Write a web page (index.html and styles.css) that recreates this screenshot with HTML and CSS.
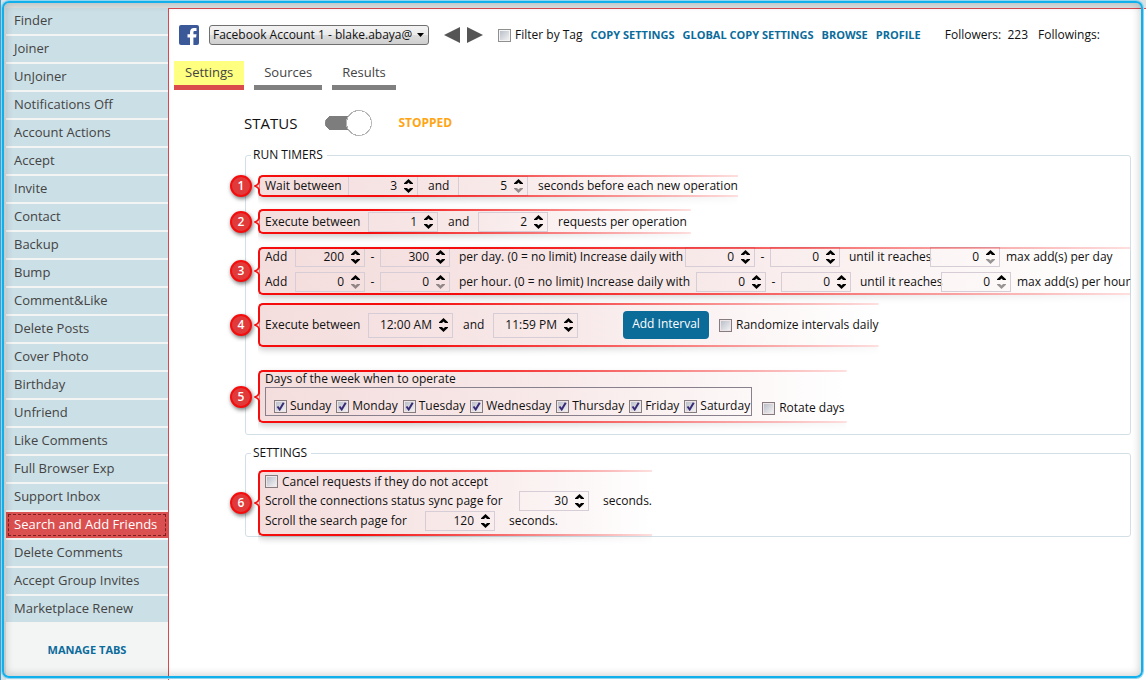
FILE: index.html
```html
<!DOCTYPE html>
<html lang="en">
<head>
<meta charset="utf-8">
<title>Search and Add Friends</title>
<link rel="stylesheet" href="styles.css">
</head>
<body>
<svg class="defs" aria-hidden="true">
  <symbol id="up" viewBox="0 0 9 5"><path d="M4.500 0 9 4.200V5H6L4.500 3.600 3 5H0V4.200z"/></symbol>
  <symbol id="down" viewBox="0 0 9 5"><path d="M4.500 5 9 .8V0H6L4.500 1.400 3 0H0V.8z"/></symbol>
  <symbol id="tip" viewBox="0 0 6 10"><path d="M5.500 0C5 3 4 4 1 5 4 6 5 7 5.500 10" fill="#f6dede" stroke="#f50d0d" stroke-width="1.800"/></symbol>
</svg>
<div class="app">
  <nav class="side">
    <a href="#">Finder</a><a href="#">Joiner</a><a href="#">UnJoiner</a><a href="#">Notifications Off</a><a href="#">Account Actions</a><a href="#">Accept</a><a href="#">Invite</a><a href="#">Contact</a><a href="#">Backup</a><a href="#">Bump</a><a href="#">Comment&amp;Like</a><a href="#">Delete Posts</a><a href="#">Cover Photo</a><a href="#">Birthday</a><a href="#">Unfriend</a><a href="#">Like Comments</a><a href="#">Full Browser Exp</a><a href="#">Support Inbox</a><a href="#" class="active">Search and Add Friends</a><a href="#">Delete Comments</a><a href="#">Accept Group Invites</a><a href="#">Marketplace Renew</a>
    <button class="link manage" type="button">MANAGE TABS</button>
  </nav>
  <main class="main">
    <header class="top">
      <svg class="fb" viewBox="0 0 20 20" aria-label="Facebook"><rect width="20" height="20" rx="2" fill="#3b5998"/><path d="M11 20v-7.500H8.500V9.200H11V7.300C11 4.500 12.500 3 15 3h2.500v3h-1.800c-1.100 0-1.300.6-1.300 1.400v1.800h3.100l-.4 3.300h-2.700V20z" fill="#fff"/></svg>
      <select class="account" aria-label="Account"><option>Facebook Account 1 - blake.abaya@yahoo.com</option></select>
      <div class="steps">
        <button type="button" aria-label="Previous account"><svg viewBox="0 0 16 16"><path d="M0 8 16 0V16z"/></svg></button>
        <button type="button" aria-label="Next account"><svg viewBox="0 0 16 16"><path d="M16 8 0 0V16z"/></svg></button>
      </div>
      <label class="check"><input type="checkbox">Filter by Tag</label>
      <div class="links">
        <button class="link" type="button">COPY SETTINGS</button>
        <button class="link" type="button">GLOBAL COPY SETTINGS</button>
        <button class="link" type="button">BROWSE</button>
        <button class="link" type="button">PROFILE</button>
      </div>
      <div class="counts"><span>Followers:&nbsp; 223</span><span>Followings:</span></div>
    </header>
    <div class="tabs">
      <button class="tab current" type="button">Settings</button>
      <button class="tab" type="button">Sources</button>
      <button class="tab" type="button">Results</button>
    </div>
    <div class="panel">
      <div class="status">
        <label for="run">STATUS</label>
        <input id="run" class="toggle" type="checkbox" checked>
        <strong>STOPPED</strong>
      </div>
      <fieldset class="group timers">
        <legend>RUN TIMERS</legend>
        <div class="note wait">
          <span class="badge">1</span><svg class="tip"><use href="#tip"/></svg>
          <div class="row">
            <span class="t-wait">Wait between</span>
            <span class="spin"><input type="text" value="3" aria-label="Minimum wait"><button type="button" aria-label="Up"><svg><use href="#up"/></svg></button><button type="button" aria-label="Down"><svg><use href="#down"/></svg></button></span>
            <span class="t-and">and</span>
            <span class="spin"><input type="text" value="5" aria-label="Maximum wait"><button type="button" aria-label="Up"><svg><use href="#up"/></svg></button><button type="button" aria-label="Down" disabled><svg><use href="#down"/></svg></button></span>
            <span>seconds before each new operation</span>
          </div>
        </div>
        <div class="note requests">
          <span class="badge">2</span><svg class="tip"><use href="#tip"/></svg>
          <div class="row">
            <span class="t-exec">Execute between</span>
            <span class="spin"><input type="text" value="1" aria-label="Minimum requests"><button type="button" aria-label="Up"><svg><use href="#up"/></svg></button><button type="button" aria-label="Down"><svg><use href="#down"/></svg></button></span>
            <span class="t-and">and</span>
            <span class="spin"><input type="text" value="2" aria-label="Maximum requests"><button type="button" aria-label="Up"><svg><use href="#up"/></svg></button><button type="button" aria-label="Down"><svg><use href="#down"/></svg></button></span>
            <span>requests per operation</span>
          </div>
        </div>
        <div class="note limits">
          <span class="badge">3</span><svg class="tip"><use href="#tip"/></svg>
          <div class="row tight">
            <span class="t-add">Add</span>
            <span class="spin"><input type="text" value="200" aria-label="Minimum per day"><button type="button" aria-label="Up"><svg><use href="#up"/></svg></button><button type="button" aria-label="Down"><svg><use href="#down"/></svg></button></span>
            <span class="dash">-</span>
            <span class="spin"><input type="text" value="300" aria-label="Maximum per day"><button type="button" aria-label="Up"><svg><use href="#up"/></svg></button><button type="button" aria-label="Down"><svg><use href="#down"/></svg></button></span>
            <span class="t-day">per day. (0 = no limit) Increase daily with</span>
            <span class="spin"><input type="text" value="0" aria-label="Minimum daily increase"><button type="button" aria-label="Up"><svg><use href="#up"/></svg></button><button type="button" aria-label="Down"><svg><use href="#down"/></svg></button></span>
            <span class="dash">-</span>
            <span class="spin"><input type="text" value="0" aria-label="Maximum daily increase"><button type="button" aria-label="Up"><svg><use href="#up"/></svg></button><button type="button" aria-label="Down"><svg><use href="#down"/></svg></button></span>
            <span class="t-until">until it reaches</span>
            <span class="spin"><input type="text" value="0" aria-label="Maximum adds per day"><button type="button" aria-label="Up"><svg><use href="#up"/></svg></button><button type="button" aria-label="Down" disabled><svg><use href="#down"/></svg></button></span>
            <span class="t-max">max add(s) per day</span>
          </div>
          <div class="row tight">
            <span class="t-add">Add</span>
            <span class="spin"><input type="text" value="0" aria-label="Minimum per hour"><button type="button" aria-label="Up"><svg><use href="#up"/></svg></button><button type="button" aria-label="Down" disabled><svg><use href="#down"/></svg></button></span>
            <span class="dash">-</span>
            <span class="spin"><input type="text" value="0" aria-label="Maximum per hour"><button type="button" aria-label="Up"><svg><use href="#up"/></svg></button><button type="button" aria-label="Down" disabled><svg><use href="#down"/></svg></button></span>
            <span class="t-hour">per hour. (0 = no limit) Increase daily with</span>
            <span class="spin"><input type="text" value="0" aria-label="Minimum hourly increase"><button type="button" aria-label="Up"><svg><use href="#up"/></svg></button><button type="button" aria-label="Down"><svg><use href="#down"/></svg></button></span>
            <span class="dash">-</span>
            <span class="spin"><input type="text" value="0" aria-label="Maximum hourly increase"><button type="button" aria-label="Up"><svg><use href="#up"/></svg></button><button type="button" aria-label="Down"><svg><use href="#down"/></svg></button></span>
            <span class="t-until">until it reaches</span>
            <span class="spin"><input type="text" value="0" aria-label="Maximum adds per hour"><button type="button" aria-label="Up"><svg><use href="#up"/></svg></button><button type="button" aria-label="Down" disabled><svg><use href="#down"/></svg></button></span>
            <span class="t-max">max add(s) per hour</span>
          </div>
        </div>
        <div class="note interval">
          <span class="badge">4</span><svg class="tip"><use href="#tip"/></svg>
          <div class="row">
            <span class="t-exec">Execute between</span>
            <span class="spin time"><input type="text" value="12:00 AM" aria-label="Start time"><button type="button" aria-label="Up"><svg><use href="#up"/></svg></button><button type="button" aria-label="Down"><svg><use href="#down"/></svg></button></span>
            <span class="t-and">and</span>
            <span class="spin time"><input type="text" value="11:59 PM" aria-label="End time"><button type="button" aria-label="Up"><svg><use href="#up"/></svg></button><button type="button" aria-label="Down"><svg><use href="#down"/></svg></button></span>
            <button class="add" type="button">Add Interval</button>
            <label class="check"><input type="checkbox">Randomize intervals daily</label>
          </div>
        </div>
        <div class="note week">
          <span class="badge">5</span><svg class="tip"><use href="#tip"/></svg>
          <div class="caption">Days of the week when to operate</div>
          <div class="row">
            <div class="days">
              <label class="check"><input type="checkbox" checked>Sunday</label>
              <label class="check"><input type="checkbox" checked>Monday</label>
              <label class="check"><input type="checkbox" checked>Tuesday</label>
              <label class="check"><input type="checkbox" checked>Wednesday</label>
              <label class="check"><input type="checkbox" checked>Thursday</label>
              <label class="check"><input type="checkbox" checked>Friday</label>
              <label class="check"><input type="checkbox" checked>Saturday</label>
            </div>
            <label class="check rotate"><input type="checkbox">Rotate days</label>
          </div>
        </div>
      </fieldset>
      <fieldset class="group">
        <legend>SETTINGS</legend>
        <div class="note sync">
          <span class="badge">6</span><svg class="tip"><use href="#tip"/></svg>
          <label class="check"><input type="checkbox">Cancel requests if they do not accept</label>
          <div class="row">
            <span class="t-sync">Scroll the connections status sync page for</span>
            <span class="spin"><input type="text" value="30" aria-label="Sync page seconds"><button type="button" aria-label="Up"><svg><use href="#up"/></svg></button><button type="button" aria-label="Down"><svg><use href="#down"/></svg></button></span>
            <span class="unit">seconds.</span>
          </div>
          <div class="row">
            <span class="t-search">Scroll the search page for</span>
            <span class="spin"><input type="text" value="120" aria-label="Search page seconds"><button type="button" aria-label="Up"><svg><use href="#up"/></svg></button><button type="button" aria-label="Down"><svg><use href="#down"/></svg></button></span>
            <span class="unit">seconds.</span>
          </div>
        </div>
      </fieldset>
    </div>
  </main>
  <div class="frame"></div>
</div>
</body>
</html>
```
FILE: styles.css
```css
* { box-sizing: border-box; }
body { margin: 0; font: 12px/18px "Open Sans", "Noto Sans", sans-serif; color: #111; background: #fff; }
button, input, select { font: inherit; color: inherit; margin: 0; }
button { border: 0; padding: 0; background: none; }
.defs { position: absolute; width: 0; height: 0; }
.app { position: relative; display: flex; min-height: 100vh; padding-top: 8px; background: #dde2e2; border-left: 1px solid #3a9fd4; }

.side { width: 162px; margin-left: 5px; flex: none; display: flex; flex-direction: column; gap: 2px; background: #f3f4f4; }
.side a { height: 26px; padding-left: 8px; font-size: 13px; line-height: 25px; color: #444; background: #cbdfe6; text-decoration: none; white-space: nowrap; }
.side a.active { color: #fff; background: #da4f4f; outline: 1px dashed #7d1f1f; outline-offset: -3px; }
.link { font-size: 11px; font-weight: 700; color: #0b6c9c; white-space: nowrap; }
.manage { margin-top: 17px; }

.main { flex: 1; min-width: 0; padding: 16px 0 0 5px; background: #fff; border: solid #d9474f; border-width: 1px 0 0 1px; }
.top { display: flex; align-items: center; height: 20px; margin-left: 5px; line-height: 16px; white-space: nowrap; }
.fb { width: 20px; height: 20px; }
.account { width: 220px; height: 20px; margin: 0 15px 0 10px; padding: 0 16px 0 3px; border: 1px solid #707070; border-radius: 3px; appearance: none; text-overflow: clip;
  background: url("data:image/svg+xml,%3Csvg xmlns='http://www.w3.org/2000/svg' viewBox='0 0 7 4'%3E%3Cpath d='M0 0h7L3.500 4z'/%3E%3C/svg%3E") right 4px center / 7px 4px no-repeat, linear-gradient(#f2f2f2, #ebebeb 50%, #ddd 50%, #cfcfcf); }
.steps { display: flex; gap: 7px; margin-right: 15px; }
.steps svg { display: block; width: 16px; height: 16px; fill: #555; }
.check { display: flex; align-items: center; gap: 4px; white-space: nowrap; }
.check input { width: 13px; height: 13px; flex: none; appearance: none; border: 1px solid #8e8f8f; background: linear-gradient(135deg, #b4b9c4, #f6f6f6); box-shadow: inset 0 0 0 1px #f4f4f4; }
.check input:checked { background: url("data:image/svg+xml,%3Csvg xmlns='http://www.w3.org/2000/svg' viewBox='0 0 11 11'%3E%3Cpath d='M2.500 5.500 4.700 8.500 8.700 1.800' fill='none' stroke='%23392a78' stroke-width='2'/%3E%3C/svg%3E") center / 11px 11px no-repeat, linear-gradient(135deg, #b4b9c4, #f6f6f6); }
.note .check input { border-color: #857c80; box-shadow: inset 0 0 0 1px #efe4e6; }
.links { display: flex; gap: 8px; margin-left: 8px; }
.counts { display: flex; gap: 10px; margin-left: 24px; }

.tabs { display: flex; gap: 10px; margin-top: 16px; }
.tab { height: 29px; padding: 0 10px 2px; font-size: 13px; color: #444; border-bottom: 5px solid #808080; }
.tab.current { padding: 0 11px 2px; background: #ffff80; border-color: #da4b4b; }

.panel { padding: 20px 15px 0 71px; }
.status { display: flex; align-items: center; height: 26px; margin-left: -1px; font-size: 15px; }
.toggle { width: 47px; height: 26px; margin: 0 26px 0 28px; appearance: none; border-radius: 13px;
  background: radial-gradient(circle at 34px 13px, #fff 12px, #aaa 12px, #bbb 13px, transparent 13px), linear-gradient(#7d7d7d, #7d7d7d) 7px 6px / 28px 14px no-repeat, radial-gradient(circle at 7px 13px, #7d7d7d 7px, transparent 7px); }
.status strong { font-size: 12px; color: #ffa514; }

.group { min-width: 0; margin: 9px 0 0; padding: 0 0 0 12px; border: 1px solid #d3dfe7; border-radius: 3px; }
.group legend { height: 18px; margin-left: -7px; padding: 0 4px 0 2px; font-size: 12px; }
.timers { margin-top: 10px; padding-bottom: 11px; }
.note { position: relative; display: flex; flex-direction: column; justify-content: center; width: fit-content; padding-left: 7px; background: linear-gradient(90deg, #f4dddd, #f8e9e9 50%, #fff); border-radius: 5px 0 0 5px; white-space: nowrap; }
.note::before { content: ""; position: absolute; inset: 0; border: 2px solid #f50d0d; border-right: 0; border-radius: 5px 0 0 5px; box-shadow: 0 3px 6px #0003; mask: linear-gradient(90deg, #000 25%, #0002); mask-clip: no-clip; clip-path: inset(-4px 0 -12px 0 round 5px 0 0 5px); pointer-events: none; }
.badge { position: absolute; left: -28px; top: calc(50% - 11px); width: 22px; height: 22px; border: 2px solid #f50d0d; border-radius: 50%; background: #e03a3a; color: #fff; font-size: 12px; font-weight: 600; line-height: 18px; text-align: center; box-shadow: 1px 2px 4px #0008; }
.tip { position: absolute; left: -4px; top: calc(50% - 5px); width: 6px; height: 10px; }
.row { display: flex; align-items: center; gap: 10px; }
.tight { gap: 9px; }
.spin { display: grid; grid-template: 1fr 1fr / 1fr 9px; column-gap: 7px; row-gap: 4px; width: 70px; height: 20px; padding: 2px 4px 2px 0; border: 1px solid #d6cdd6; flex: none; }
.spin input { grid-row: 1 / 3; min-width: 0; width: 100%; height: 14px; padding: 0; border: 0; background: none; text-align: right; line-height: 14px; }
.spin svg { display: block; width: 9px; height: 5px; }
.spin button:disabled { opacity: .4; }
.time { width: 85px; height: 25px; padding: 4px 4px 5px 0; }
.dash { width: 15px; margin: 0 -9px; text-align: center; }
.t-wait { width: 73px; }
.t-exec { width: 93px; }
.t-and { width: 20px; }
.t-add { width: 21px; }
.t-day { width: 217px; }
.t-hour { width: 228px; }
.t-until { width: 72px; }
.t-max { margin-left: -3px; }
.t-sync { width: 244px; }
.t-search { width: 150px; }
.unit { margin-left: 4px; }

.wait { height: 22px; margin-top: 11px; }
.requests { height: 25px; margin-top: 12px; padding-right: 4px; }
.limits { height: 48px; margin-top: 13px; gap: 5px; justify-content: flex-start; }
.limits .row { line-height: 16px; }
.interval { height: 44px; margin-top: 8px; }
.add { width: 86px; height: 28px; margin-left: 35px; padding-bottom: 3px; border-radius: 4px; color: #fff; background: #0b6c99; }
.week { height: 53px; margin-top: 23px; padding-right: 2px; justify-content: flex-start; }
.caption { height: 16px; line-height: 18px; }
.days { display: flex; align-items: flex-end; gap: 5px; height: 29px; padding: 0 1px 0 8px; border: 1px solid #88808c; }
.days .check { gap: 3px; }
.rotate { padding-top: 13px; }
.sync { height: 66px; margin-top: 8px; padding-bottom: 3px; }
.sync > .check { height: 19px; }

.frame { position: absolute; inset: 1px 3px 2px 1px; border: 2px solid #12b0ea; border-radius: 7px; box-shadow: 0 0 0 1px #8fd4f0, inset 0 0 8px 1px #0003; pointer-events: none; }
```
